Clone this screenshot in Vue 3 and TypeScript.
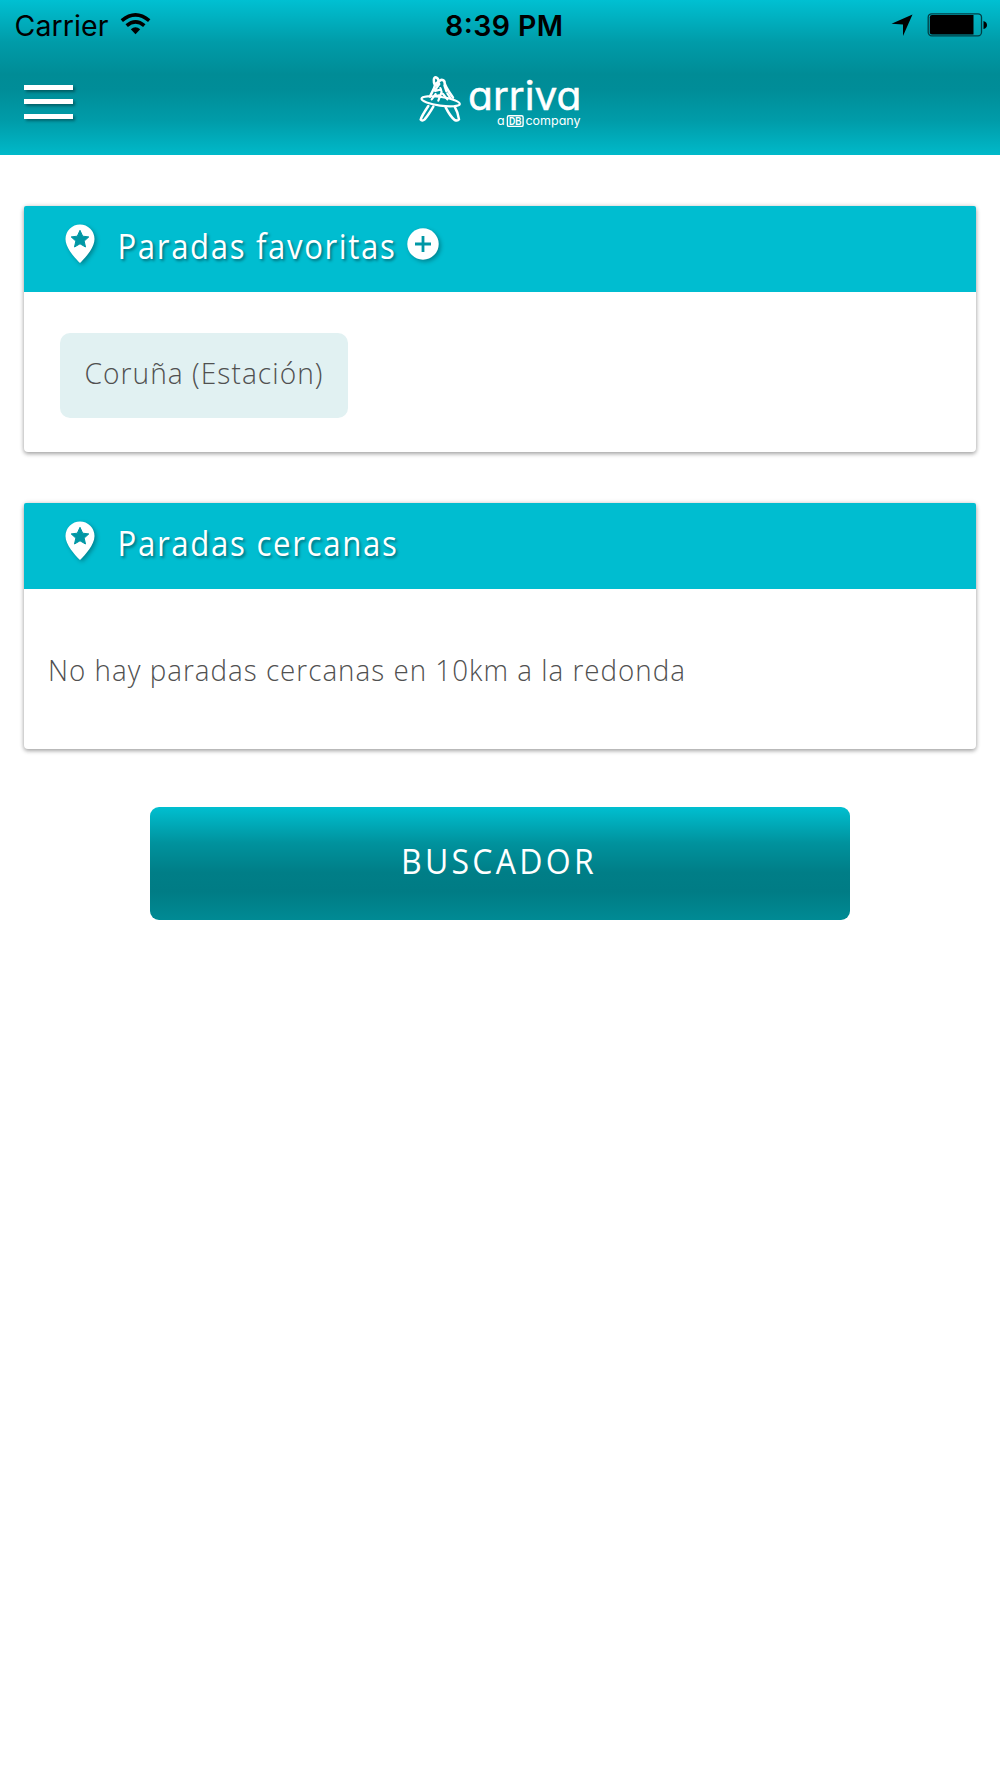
<script setup lang="ts">
interface Stop {
  id: number
  name: string
}

const favourites: Stop[] = [{ id: 1, name: 'Coruña (Estación)' }]
</script>

<template>
  <div class="screen">
    <header class="top">
      <div class="status">
        <div class="side">
          <svg width="110" height="44"><text class="carrier" x="14.500" y="35.500" textLength="94">Carrier</text></svg>
          <svg class="wifi" width="32" height="44" viewBox="0 0 32 44" fill="none" stroke="#000">
            <path d="M1.800 20.600Q15.500 9 29.200 20.600" stroke-width="3.600" />
            <path d="M6.700 25.700Q15.500 18 24.300 25.700" stroke-width="3.600" />
            <path d="M10.800 29.300Q15.500 25.300 20.200 29.300L15.500 34.200Z" fill="#000" stroke="none" />
          </svg>
        </div>
        <svg class="time" width="120" height="44"><text class="clock" x="1" y="35.500" textLength="118">8:39 PM</text></svg>
        <div class="side right">
          <svg width="24" height="44" viewBox="0 0 24 44"><path d="M22.500 14.500L13 36V24.500L1.500 23.700Z" /></svg>
          <svg width="62" height="44" viewBox="0 0 62 44">
            <rect x="1.200" y="13.800" width="53.300" height="22" rx="3.500" fill="none" stroke="#003f45" stroke-width="1.300" />
            <path d="M5 15H46.500V34.500H5Q2.800 34.500 2.800 32.300V17.200Q2.800 15 5 15Z" />
            <path d="M56.500 21Q60 22 60 25T56.500 29Z" />
          </svg>
        </div>
      </div>
      <nav class="bar">
        <button class="menu" aria-label="Menú"><i /><i /><i /></button>
        <svg class="logo" width="170" height="60" viewBox="0 0 170 60">
          <g transform="translate(0 4) scale(.33333)" fill="none" stroke="#fff" stroke-width="7.500" stroke-linecap="round" stroke-linejoin="round">
            <path d="M40 108C32 120 18 142 17 149Q21 155 29 148C38 138 48 122 55 110" />
            <path d="M92 112C98 124 112 144 119 150Q128 154 132 148C130 134 126 122 119 110" />
            <ellipse cx="77" cy="94" rx="58" ry="13" transform="rotate(8 77 94)" stroke-width="6.500" />
            <path d="M45 80C50 68 58 56 60 46C54 34 56 22 62 22Q70 24 71 34L62 42" />
            <path d="M66 46Q72 30 80 29Q90 30 89 40C92 52 104 68 114 83" />
            <path d="M73 42L60 60M62 72L50 88M60 63L78 58M62 78L72 76M76 54L80 66L70 92M88 46L94 64M84 72L97 88M97 70L106 84" stroke-width="6.500" />
          </g>
          <text class="brand" x="53" y="44" textLength="113.500" lengthAdjust="spacingAndGlyphs">arriva</text>
          <text class="sub" x="82" y="59" textLength="7.500">a</text>
          <rect x="92.400" y="49.800" width="15.700" height="10.600" rx="1.500" fill="none" stroke="#fff" stroke-width="1.400" />
          <text class="db" x="94" y="58.900" textLength="12.500" lengthAdjust="spacingAndGlyphs">DB</text>
          <text class="sub" x="110.500" y="59" textLength="55" lengthAdjust="spacingAndGlyphs">company</text>
        </svg>
      </nav>
    </header>

    <main>
      <section class="card">
        <h2>
          <svg class="pin" width="30" height="40" viewBox="0 0 30 40">
            <path fill="#fff" d="M15 .5A14.500 14.500 0 0 1 29.500 15C29.500 24 20 34 15 39C10 34 .5 24 .5 15A14.500 14.500 0 0 1 15 .5Z" />
            <path fill="#0097a5" stroke="#0097a5" stroke-linejoin="round" d="M15 6.300L17.700 12.200L23.800 12.900L19.200 17.100L20.500 23L15 19.800L9.500 23L10.800 17.100L6.200 12.900L12.300 12.200Z" />
          </svg>
          <svg class="title" width="280" height="60"><text x="-.5" y="40.500" textLength="279" lengthAdjust="spacingAndGlyphs">Paradas favoritas</text></svg>
          <svg class="plus" width="32" height="32" viewBox="0 0 32 32">
            <circle cx="16" cy="16" r="15.700" fill="#fff" />
            <path d="M16 8V24M8 16H24" stroke="#0097a5" stroke-width="2.800" />
          </svg>
        </h2>
        <div class="body chips">
          <button v-for="stop in favourites" :key="stop.id" class="chip">
            <svg width="240" height="60"><text x="0.500" y="41" textLength="239" lengthAdjust="spacingAndGlyphs">{{ stop.name }}</text></svg>
          </button>
        </div>
      </section>

      <section class="card">
        <h2>
          <svg class="pin" width="30" height="40" viewBox="0 0 30 40">
            <path fill="#fff" d="M15 .5A14.500 14.500 0 0 1 29.500 15C29.500 24 20 34 15 39C10 34 .5 24 .5 15A14.500 14.500 0 0 1 15 .5Z" />
            <path fill="#0097a5" stroke="#0097a5" stroke-linejoin="round" d="M15 6.300L17.700 12.200L23.800 12.900L19.200 17.100L20.500 23L15 19.800L9.500 23L10.800 17.100L6.200 12.900L12.300 12.200Z" />
          </svg>
          <svg class="title" width="285" height="60"><text x="-.5" y="40.500" textLength="281" lengthAdjust="spacingAndGlyphs">Paradas cercanas</text></svg>
        </h2>
        <div class="body note">
          <svg width="660" height="60"><text x="0" y="41" textLength="638" lengthAdjust="spacingAndGlyphs">No hay paradas cercanas en 10km a la redonda</text></svg>
        </div>
      </section>

      <button class="search">
        <svg width="200" height="60"><text x="1" y="40.500" textLength="196" lengthAdjust="spacingAndGlyphs">BUSCADOR</text></svg>
      </button>
    </main>
  </div>
</template>

<style>
body {
  margin: 0;
  background: #fff;
}
</style>

<style scoped>
.screen {
  width: 1000px;
  min-height: 1778px;
  background: #fff;
  font-family: 'Open Sans', 'Noto Sans', sans-serif;
}
svg {
  display: block;
  flex: none;
  overflow: visible;
}
button {
  border: 0;
  padding: 0;
  font: inherit;
}
.top {
  height: 154.500px;
  background: linear-gradient(#00c0d2 0%, #009ca9 27%, #008c96 48%, #008d98 58%, #009ca9 78%, #00b9c9 100%);
}
.status {
  display: flex;
  justify-content: space-between;
  height: 44px;
}
.side {
  display: flex;
  width: 400px;
}
.side.right {
  justify-content: flex-end;
  gap: 13px;
  padding-right: 11px;
  width: 389px;
}
.wifi {
  margin-left: 10px;
}
.time {
  margin-left: 8px;
}
.carrier,
.clock {
  font-family: Inter, sans-serif;
  font-size: 28.500px;
}
.clock {
  font-weight: 600;
}
.bar {
  display: flex;
  align-items: flex-start;
}
.menu {
  display: flex;
  flex-direction: column;
  gap: 9.500px;
  width: 49px;
  margin: 40.500px 0 0 24px;
  background: none;
}
.menu i {
  height: 5px;
  background: #fff;
  box-shadow: 2px 2px 3px rgba(0, 0, 0, 0.35);
}
.logo {
  margin: 22px 0 0 342px;
  fill: #fff;
}
.brand {
  font: 400 39.500px Inter, sans-serif;
  font-feature-settings: 'cv11';
  stroke: #fff;
  stroke-width: 0.500px;
}
.sub {
  font: 400 12.500px Inter, sans-serif;
  font-feature-settings: 'cv11';
}
.db {
  font: 700 10.500px 'Liberation Sans', sans-serif;
}
main {
  display: flex;
  flex-direction: column;
  padding: 51px 24px 0;
}
.card {
  height: 246.500px;
  margin-bottom: 50.500px;
  border-radius: 4px;
  background: #fff;
  box-shadow: 0 2px 4px rgba(0, 0, 0, 0.3), 0 0 5px rgba(0, 0, 0, 0.15);
}
h2 {
  display: flex;
  align-items: flex-start;
  height: 86.500px;
  margin: 0;
  padding-left: 41px;
  border-radius: 2px 2px 0 0;
  background: #00bdd0;
  font-size: 34px;
  font-weight: 400;
  box-sizing: border-box;
}
.pin {
  margin-top: 18.500px;
  filter: drop-shadow(2px 2px 2px rgba(0, 0, 0, 0.3));
}
.title {
  margin: 12.500px 0 0 23px;
  fill: #fff;
  text-shadow: 2px 2px 3px rgba(0, 0, 0, 0.4);
}
.title text {
  letter-spacing: 1.800px;
}
.plus {
  margin: 22px 0 0 8.500px;
  filter: drop-shadow(2px 2px 2px rgba(0, 0, 0, 0.3));
}
.body {
  display: flex;
  align-items: flex-start;
  fill: #505050;
  font-size: 30px;
  font-weight: 300;
}
.body text {
  letter-spacing: 1.100px;
}
.chips {
  padding: 41px 36px 0;
}
.chip {
  display: flex;
  width: 288px;
  height: 85px;
  padding: 10px 0 0 24px;
  border-radius: 10px;
  background: #e1f1f2;
  box-sizing: border-box;
}
.note {
  padding: 51px 24px 0;
}
.search {
  display: flex;
  justify-content: center;
  align-self: center;
  width: 700px;
  height: 113px;
  margin-top: 7.500px;
  padding-top: 26px;
  border-radius: 9px;
  background: linear-gradient(#00bfd0 0%, #00929d 32%, #007e87 58%, #007c85 75%, #008a94 100%);
  fill: #fff;
  font-size: 34px;
  font-weight: 400;
}
.search text {
  letter-spacing: 3.500px;
}
</style>
